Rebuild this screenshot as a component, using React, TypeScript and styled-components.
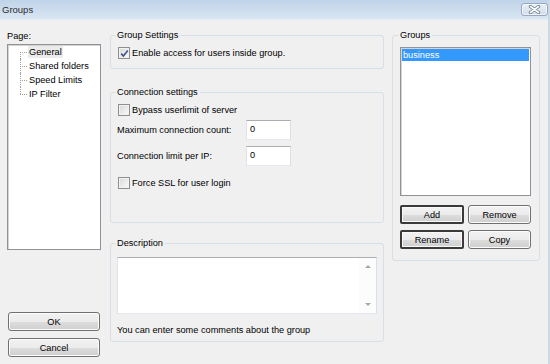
import React from 'react'
import styled, { createGlobalStyle, css } from 'styled-components'

const GlobalStyle = createGlobalStyle`
  html, body {
    margin: 0;
    padding: 0;
    background: #f0f0f0;
  }
  body {
    font-family: 'Liberation Sans', Arial, sans-serif;
    font-size: 9.2px;
    color: #000;
  }
  * {
    box-sizing: border-box;
  }
`

const Window = styled.div`
  width: 550px;
  height: 364px;
  overflow: hidden;
  background: #f0f0f0;
  display: flex;
  flex-direction: column;
  border-right: 2px solid #cbd8e5;
`

const TitleBar = styled.div`
  height: 20px;
  flex: none;
  display: flex;
  align-items: center;
  justify-content: space-between;
  padding-left: 2px;
  background: linear-gradient(to bottom, #c0d3e8, #d9e6f3);
  border-bottom: 1px solid #e4ecf4;
`

const Title = styled.span`
  font-size: 9.5px;
  color: #2b2b2b;
`

const CloseButton = styled.div`
  width: 27px;
  height: 13px;
  display: flex;
  align-items: center;
  justify-content: center;
  border: 1px solid #95a8c0;
  border-radius: 3px;
  background: linear-gradient(to bottom, #e9eff6, #d3dde9);
  box-shadow: inset 0 0 0 1px rgba(255, 255, 255, 0.6);
`

const Body = styled.div`
  flex: 1;
  display: flex;
  padding: 9px 0 0 7px;
`

const LeftColumn = styled.div`
  width: 94px;
  display: flex;
  flex-direction: column;
  padding-top: 1px;
`

const MiddleColumn = styled.div`
  width: 274px;
  margin-left: 9px;
  display: flex;
  flex-direction: column;
`

const RightColumn = styled.div`
  width: 148px;
  margin-left: 8px;
`

const PageLabel = styled.div`
  line-height: 12px;
  margin-bottom: 2px;
`

const Sunken = styled.div`
  background: #fff;
  border: 1px solid #8f9296;
  box-shadow: inset 1px 1px 0 #d4d4d4;
`

const Tree = styled(Sunken)`
  height: 206px;
`

const TreeList = styled.ul`
  list-style: none;
  margin: 0;
  padding: 0;
`

const TreeItem = styled.li`
  position: relative;
  height: 14px;
  line-height: 14px;
  padding-left: 20px;

  &::before {
    content: '';
    position: absolute;
    left: 12px;
    top: 7px;
    width: 7px;
    border-top: 1px dotted #a0a0a0;
  }

  &::after {
    content: '';
    position: absolute;
    left: 12px;
    top: 0;
    bottom: 0;
    border-left: 1px dotted #a0a0a0;
  }

  &:first-child::after {
    top: 7px;
  }

  &:last-child::after {
    bottom: 7px;
  }
`

const TreeLabel = styled.span<{ $selected?: boolean }>`
  padding: 1px 1px;
  background: ${p => (p.$selected ? '#ebebeb' : 'transparent')};
`

const PushButton = styled.button<{ $default?: boolean; $mt?: number }>`
  height: 19px;
  margin: ${p => p.$mt ?? 0}px 0 0 0;
  padding: 0;
  font: inherit;
  color: #000;
  border: 1px solid #707070;
  border-radius: 3px;
  background: linear-gradient(to bottom, #f2f2f2 0%, #ebebeb 50%, #dddddd 51%, #cfcfcf 100%);
  box-shadow: inset 0 0 0 1px #fcfcfc;

  ${p =>
    p.$default &&
    css`
      border: 2px solid #3a3a3a;
      border-radius: 2px;
      box-shadow: inset 0 0 0 1px #f8f8f8;
    `}
`

const DialogButton = styled(PushButton)`
  width: 92px;
  margin-left: 1px;
`

const GroupBox = styled.fieldset<{ $height: number; $mt?: number }>`
  margin: ${p => p.$mt ?? 0}px 0 0 0;
  padding: 4px 6px 0 6px;
  height: ${p => p.$height}px;
  border: 1px solid #d5dfe5;
  border-radius: 3px;
  min-width: 0;
`

const WideGroupBox = styled(GroupBox)`
  padding: 4px 8px 0 7px;
`

const Legend = styled.legend`
  padding: 0 2px;
  margin-left: -2px;
  line-height: 13px;
`

const CheckRow = styled.label<{ $mt?: number }>`
  display: flex;
  align-items: center;
  gap: 2px;
  height: 14px;
  margin-top: ${p => p.$mt ?? 0}px;
`

const CheckBox = styled.span`
  width: 12px;
  height: 12px;
  margin-left: 1px;
  display: flex;
  align-items: center;
  justify-content: center;
  border: 1px solid #8e8f8f;
  background: linear-gradient(135deg, #d9d9d9, #fafafa);
  box-shadow: inset 0 0 0 1px #f2f2f2;
`

const FieldRow = styled.div<{ $mt?: number }>`
  display: flex;
  align-items: center;
  margin-top: ${p => p.$mt ?? 0}px;
`

const FieldLabel = styled.span`
  width: 129px;
`

const TextInput = styled.input`
  width: 45px;
  height: 20px;
  padding: 1px 3px 3px;
  font: inherit;
  color: #000;
  background: #fff;
  border: 1px solid;
  border-color: #abadb3 #dbdfe6 #e3e9ef #e2e3ea;
  outline: none;
`

const Memo = styled.div`
  display: flex;
  height: 57px;
  margin-top: 3px;
  background: #fff;
  border: 1px solid;
  border-color: #abadb3 #dbdfe6 #e3e9ef #e2e3ea;
`

const MemoText = styled.div`
  flex: 1;
`

const ScrollTrack = styled.div`
  width: 17px;
  display: flex;
  flex-direction: column;
  justify-content: space-between;
  background: #fcfcfc;
`

const ScrollArrow = styled.div<{ $dir: 'up' | 'down' }>`
  height: 17px;
  display: flex;
  align-items: center;
  justify-content: center;

  &::before {
    content: '';
    border-left: 3px solid transparent;
    border-right: 3px solid transparent;
    ${p =>
      p.$dir === 'up'
        ? css`border-bottom: 3px solid #a9a9a9;`
        : css`border-top: 3px solid #a9a9a9;`}
  }
`

const Hint = styled.div`
  margin-top: 10px;
  line-height: 12px;
`

const ListBox = styled(Sunken)`
  height: 149px;
  margin-top: 1px;
  padding: 1px;
`

const ListItem = styled.div<{ $selected?: boolean }>`
  height: 12px;
  line-height: 12px;
  padding-left: 1px;
  ${p =>
    p.$selected &&
    css`
      background: #3399ff;
      color: #fff;
    `}
`

const ButtonGrid = styled.div`
  display: grid;
  grid-template-columns: 64px 63px;
  column-gap: 4px;
  row-gap: 6px;
  margin-top: 9px;
`

const Check = () => (
  <svg width="9" height="9" viewBox="0 0 9 9">
    <path d="M1.2 4.6 L3.4 7 L7.8 1.6" fill="none" stroke="#3d5287" strokeWidth="1.6" />
  </svg>
)

const CloseGlyph = () => (
  <svg width="13" height="9" viewBox="0 0 13 9">
    <path d="M2.5 1.5 L10.5 7.5 M10.5 1.5 L2.5 7.5" stroke="#6f7f92" strokeWidth="3.4" strokeLinecap="round" />
    <path d="M2.5 1.5 L10.5 7.5 M10.5 1.5 L2.5 7.5" stroke="#ffffff" strokeWidth="1.6" strokeLinecap="round" />
  </svg>
)

const pages = ['General', 'Shared folders', 'Speed Limits', 'IP Filter']

export default function App() {
  return (
    <>
      <GlobalStyle />
      <Window>
        <TitleBar>
          <Title>Groups</Title>
          <CloseButton>
            <CloseGlyph />
          </CloseButton>
        </TitleBar>
        <Body>
          <LeftColumn>
            <PageLabel>Page:</PageLabel>
            <Tree>
              <TreeList>
                {pages.map((p, i) => (
                  <TreeItem key={p}>
                    <TreeLabel $selected={i === 0}>{p}</TreeLabel>
                  </TreeItem>
                ))}
              </TreeList>
            </Tree>
            <DialogButton $mt={62}>OK</DialogButton>
            <DialogButton $mt={7}>Cancel</DialogButton>
          </LeftColumn>

          <MiddleColumn>
            <GroupBox $height={40}>
              <Legend>Group Settings</Legend>
              <CheckRow>
                <CheckBox>
                  <Check />
                </CheckBox>
                Enable access for users inside group.
              </CheckRow>
            </GroupBox>

            <GroupBox $height={137} $mt={17}>
              <Legend>Connection settings</Legend>
              <CheckRow>
                <CheckBox />
                Bypass userlimit of server
              </CheckRow>
              <FieldRow $mt={3}>
                <FieldLabel>Maximum connection count:</FieldLabel>
                <TextInput readOnly value="0" />
              </FieldRow>
              <FieldRow $mt={6}>
                <FieldLabel>Connection limit per IP:</FieldLabel>
                <TextInput readOnly value="0" />
              </FieldRow>
              <CheckRow $mt={10}>
                <CheckBox />
                Force SSL for user login
              </CheckRow>
            </GroupBox>

            <GroupBox $height={105} $mt={14}>
              <Legend>Description</Legend>
              <Memo>
                <MemoText />
                <ScrollTrack>
                  <ScrollArrow $dir="up" />
                  <ScrollArrow $dir="down" />
                </ScrollTrack>
              </Memo>
              <Hint>You can enter some comments about the group</Hint>
            </GroupBox>
          </MiddleColumn>

          <RightColumn>
            <WideGroupBox $height={232}>
              <Legend>Groups</Legend>
              <ListBox>
                <ListItem $selected>business</ListItem>
              </ListBox>
              <ButtonGrid>
                <PushButton $default>Add</PushButton>
                <PushButton>Remove</PushButton>
                <PushButton $default>Rename</PushButton>
                <PushButton>Copy</PushButton>
              </ButtonGrid>
            </WideGroupBox>
          </RightColumn>
        </Body>
      </Window>
    </>
  )
}
